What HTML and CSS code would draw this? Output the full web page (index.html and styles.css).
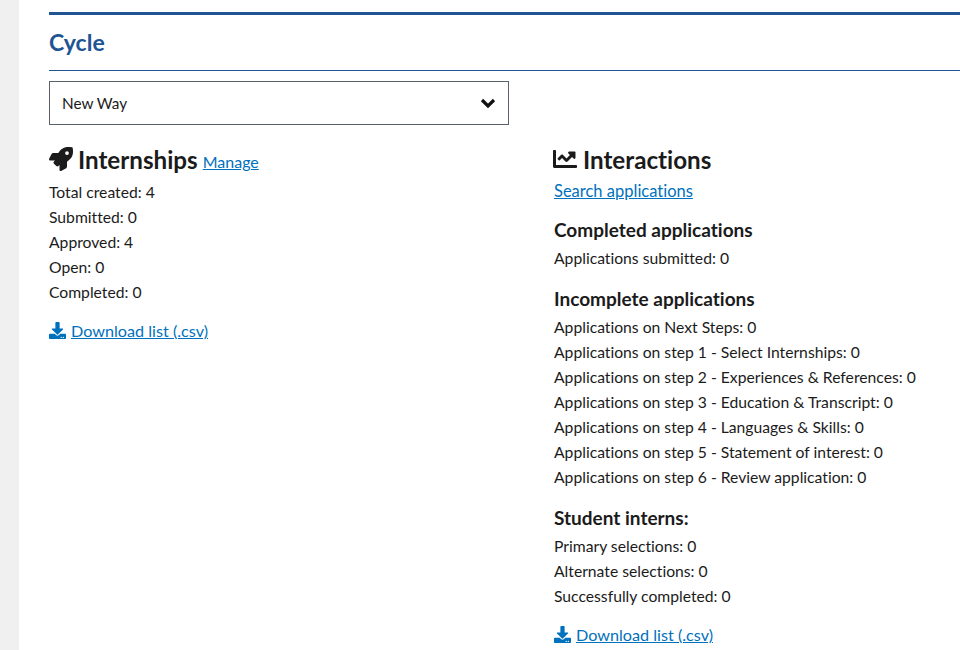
FILE: index.html
```html
<!DOCTYPE html>
<html lang="en">
<head>
    <meta charset="UTF-8">
    <meta name="viewport" content="width=device-width, initial-scale=1.0">
    <title>Cycle</title>
    <link rel="stylesheet" href="styles.css">
</head>
<body>

<div class="page">
    <div class="side"></div>
    <main class="content">
        <h1 class="title">Cycle</h1>

        <div class="select">
            <span class="select-text">New Way</span>
            <svg class="chevron" viewBox="0 0 16 12"><path d="M2 3l6 6 6-6" fill="none" stroke="#111" stroke-width="3.2"/></svg>
        </div>

        <div class="columns">
            <section class="col">
                <h2 class="head">
                    <svg class="head-icon" viewBox="0 0 512 512"><path d="M505.12 19.09c-1.19-5.53-6.66-11-12.21-12.19C460.72 0 435.51 0 410.41 0 307.18 0 245.27 55.2 199.05 128H94.84c-16.35.02-35.56 11.88-42.89 26.48L2.52 253.3A28.4 28.4 0 0 0 0 264a24 24 0 0 0 24.01 24h103.81l-22.47 22.47c-11.37 11.36-13 32.26 0 45.25l50.9 50.91c11.16 11.19 32.16 13.16 45.28 0L224 384.16V488a24 24 0 0 0 24 24 28.56 28.56 0 0 0 10.71-2.52l98.73-49.39c14.63-7.3 26.51-26.5 26.51-42.86V312.8c72.6-46.31 128.03-108.41 128.03-211.1.1-25.2.1-50.4-6.86-82.61zM384.04 168a40 40 0 1 1 40.01-40 40.02 40.02 0 0 1-40.01 40z"/></svg>
                    Internships <a class="manage" href="#">Manage</a>
                </h2>
                <p class="row">Total created: 4</p>
                <p class="row">Submitted: 0</p>
                <p class="row">Approved: 4</p>
                <p class="row">Open: 0</p>
                <p class="row">Completed: 0</p>
                <p class="download">
                    <svg class="dl-icon" viewBox="0 0 512 512"><path d="M216 0h80c13.3 0 24 10.7 24 24v168h87.7c17.8 0 26.7 21.5 14.1 34.1L269.7 378.3c-7.5 7.5-19.8 7.5-27.3 0L90.1 226.1c-12.6-12.6-3.7-34.1 14.1-34.1H192V24c0-13.3 10.7-24 24-24zm296 376v112c0 13.3-10.7 24-24 24H24c-13.3 0-24-10.7-24-24V376c0-13.3 10.7-24 24-24h146.7l49 49c20.1 20.1 52.5 20.1 72.6 0l49-49H488c13.3 0 24 10.7 24 24zm-124 88c0-11-9-20-20-20s-20 9-20 20 9 20 20 20 20-9 20-20zm64 0c0-11-9-20-20-20s-20 9-20 20 9 20 20 20 20-9 20-20z"/></svg>
                    <a href="#">Download list (.csv)</a>
                </p>
            </section>

            <section class="col col-right">
                <h2 class="head">
                    <svg class="head-icon" viewBox="0 0 512 512"><path d="M496 384H64V80c0-8.84-7.16-16-16-16H16C7.16 64 0 71.16 0 80v336c0 17.67 14.33 32 32 32h464c8.84 0 16-7.16 16-16v-32c0-8.84-7.16-16-16-16zM464 96H345.94c-21.38 0-32.09 25.85-16.97 40.97l32.4 32.4L288 242.75l-73.37-73.37c-12.5-12.5-32.76-12.5-45.25 0l-68.69 68.69c-6.25 6.25-6.25 16.38 0 22.63l22.62 22.62c6.25 6.25 16.38 6.25 22.63 0L192 237.25l73.37 73.37c12.5 12.5 32.76 12.5 45.25 0l96-96 32.4 32.4c15.12 15.12 40.97 4.41 40.97-16.97V112c.01-8.84-7.15-16-15.99-16z"/></svg>
                    Interactions
                </h2>
                <p class="row search"><a href="#">Search applications</a></p>

                <h3 class="sub">Completed applications</h3>
                <p class="row">Applications submitted: 0</p>

                <h3 class="sub">Incomplete applications</h3>
                <p class="row">Applications on Next Steps: 0</p>
                <p class="row">Applications on step 1 - Select Internships: 0</p>
                <p class="row">Applications on step 2 - Experiences &amp; References: 0</p>
                <p class="row">Applications on step 3 - Education &amp; Transcript: 0</p>
                <p class="row">Applications on step 4 - Languages &amp; Skills: 0</p>
                <p class="row">Applications on step 5 - Statement of interest: 0</p>
                <p class="row">Applications on step 6 - Review application: 0</p>

                <h3 class="sub">Student interns:</h3>
                <p class="row">Primary selections: 0</p>
                <p class="row">Alternate selections: 0</p>
                <p class="row">Successfully completed: 0</p>
                <p class="download">
                    <svg class="dl-icon" viewBox="0 0 512 512"><path d="M216 0h80c13.3 0 24 10.7 24 24v168h87.7c17.8 0 26.7 21.5 14.1 34.1L269.7 378.3c-7.5 7.5-19.8 7.5-27.3 0L90.1 226.1c-12.6-12.6-3.7-34.1 14.1-34.1H192V24c0-13.3 10.7-24 24-24zm296 376v112c0 13.3-10.7 24-24 24H24c-13.3 0-24-10.7-24-24V376c0-13.3 10.7-24 24-24h146.7l49 49c20.1 20.1 52.5 20.1 72.6 0l49-49H488c13.3 0 24 10.7 24 24zm-124 88c0-11-9-20-20-20s-20 9-20 20 9 20 20 20 20-9 20-20zm64 0c0-11-9-20-20-20s-20 9-20 20 9 20 20 20 20-9 20-20z"/></svg>
                    <a href="#">Download list (.csv)</a>
                </p>
            </section>
        </div>
    </main>
</div>

</body>
</html>
```

FILE: styles.css
```css
html, body {
    height: 650px;
    overflow: hidden;
}
body {
    margin: 0;
    font-family: Lato, "Noto Sans", sans-serif;
    font-size: 15.7px;
    font-variant-ligatures: none;
    line-height: 25px;
    color: #1b1b1b;
    background: white;
}
.page {
    display: flex;
    height: 650px;
}
.side {
    width: 19px;
    flex: none;
    background: #f0f0f0;
}
.content {
    flex: 1;
    min-width: 0;
    padding: 12px 0 0 30px;
}
.title {
    margin: 0 0 10px;
    height: 55px;
    border-top: 3px solid #205493;
    border-bottom: 1px solid #205493;
    font-size: 23px;
    line-height: 55px;
    font-weight: 700;
    color: #205493;
}
.select {
    display: flex;
    align-items: center;
    justify-content: space-between;
    box-sizing: border-box;
    width: 460px;
    height: 44px;
    padding: 0 12px;
    border: 1px solid #5b616b;
}
.select-text {
    font-size: 15.3px;
}
.chevron {
    width: 16px;
    height: 12px;
}
.columns {
    display: flex;
    margin-top: 20px;
}
.col {
    flex: none;
    width: 504px;
}
.col-right {
    flex: 1;
    min-width: 0;
    width: auto;
    padding-left: 1px;
}
.head {
    display: flex;
    align-items: center;
    margin: 0 0 4px;
    height: 30px;
    font-size: 24.2px;
    line-height: 30px;
    font-weight: 700;
}
.head-icon {
    width: 24px;
    height: 24px;
    margin: -2px 5px 0 0;
    fill: #1b1b1b;
}
.col-right .head-icon {
    margin: -2px 6px 0 -1px;
}
.manage {
    margin-left: 5px;
    margin-top: 3px;
    font-size: 16px;
    font-weight: 400;
    line-height: 25px;
}
.row {
    margin: 0;
    height: 25px;
    line-height: 27px;
}
.search {
    margin: 0 0 -3px;
    line-height: 25px;
}
.search a {
    font-size: 16.5px;
}
.sub {
    margin: 16px 0 3px;
    font-size: 19px;
    line-height: 25px;
    font-weight: 700;
}
.download {
    display: flex;
    align-items: center;
    margin: 14px 0 0;
}
.dl-icon {
    width: 17px;
    height: 17px;
    margin-right: 5px;
    fill: #0071bc;
}
a {
    color: #0071bc;
    font-size: 16.2px;
    text-decoration: underline;
}
```
